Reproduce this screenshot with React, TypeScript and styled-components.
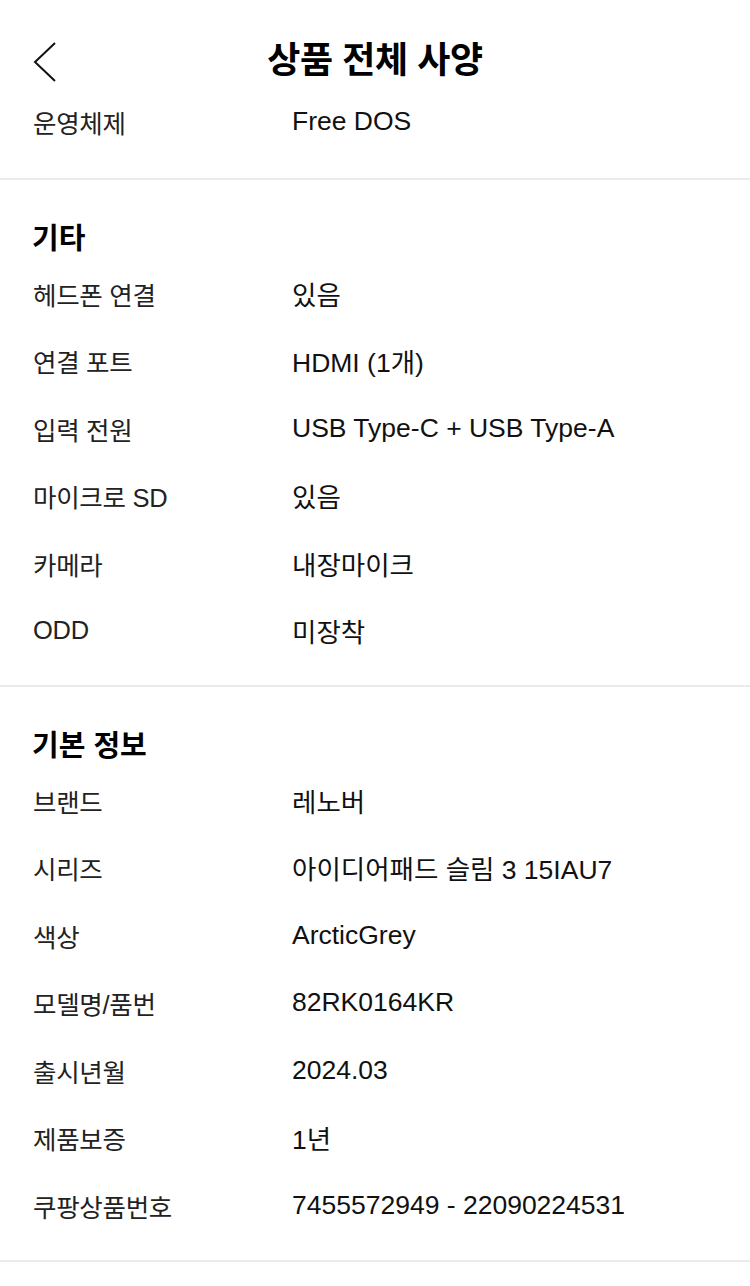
import styled, { createGlobalStyle } from "styled-components";

const GlobalStyle = createGlobalStyle`
  body {
    margin: 0;
    background: #fff;
    font-family: "Liberation Sans", "Noto Sans CJK KR", sans-serif;
    color: #111;
  }
`;

const Page = styled.div`
  width: 750px;
  background: #fff;
`;

const Header = styled.header`
  position: relative;
  height: 88px;
  box-sizing: border-box;
  padding-top: 35px;
  display: flex;
  align-items: flex-start;
  justify-content: center;
`;

const BackButton = styled.button`
  position: absolute;
  left: 28px;
  top: 38px;
  width: 34px;
  height: 48px;
  padding: 0;
  border: 0;
  background: none;
  display: flex;
  align-items: center;
  justify-content: center;
`;

const Title = styled.h1`
  margin: 0;
  height: 52px;
  line-height: 52px;
  font-size: 36px;
  font-weight: 700;
  letter-spacing: -0.4px;
  color: #000;
`;

const Section = styled.section<{ $top: number; $bottom: number }>`
  padding: ${(p) => p.$top}px 0 ${(p) => p.$bottom}px;
  border-bottom: 2px solid #ebebeb;
`;

const SectionTitle = styled.h2`
  margin: 0;
  padding: 0 32px;
  height: 42px;
  line-height: 42px;
  font-size: 29px;
  font-weight: 700;
  color: #000;
`;

const Row = styled.div`
  display: grid;
  grid-template-columns: 259px 1fr;
  align-items: center;
  height: 67.5px;
  padding-left: 33px;
`;

const Label = styled.span`
  font-size: 25.5px;
  letter-spacing: -0.3px;
  color: #222;
`;

const Value = styled.span`
  font-size: 26.5px;
  color: #111;
`;

type Spec = [string, string];

const etc: Spec[] = [
  ["헤드폰 연결", "있음"],
  ["연결 포트", "HDMI (1개)"],
  ["입력 전원", "USB Type-C + USB Type-A"],
  ["마이크로 SD", "있음"],
  ["카메라", "내장마이크"],
  ["ODD", "미장착"],
];

const basic: Spec[] = [
  ["브랜드", "레노버"],
  ["시리즈", "아이디어패드 슬림 3 15IAU7"],
  ["색상", "ArcticGrey"],
  ["모델명/품번", "82RK0164KR"],
  ["출시년월", "2024.03"],
  ["제품보증", "1년"],
  ["쿠팡상품번호", "7455572949 - 22090224531"],
];

const SpecRows = ({ items }: { items: Spec[] }) => (
  <>
    {items.map(([k, v]) => (
      <Row key={k}>
        <Label>{k}</Label>
        <Value>{v}</Value>
      </Row>
    ))}
  </>
);

export default function App() {
  return (
    <Page>
      <GlobalStyle />
      <Header>
        <BackButton aria-label="뒤로">
          <svg width="26" height="42" viewBox="0 0 26 42">
            <path d="M23 2 L3 21 L23 40" fill="none" stroke="#111" strokeWidth="2" />
          </svg>
        </BackButton>
        <Title>상품 전체 사양</Title>
      </Header>

      <Section $top={0} $bottom={22}>
        <SpecRows items={[["운영체제", "Free DOS"]]} />
      </Section>

      <Section $top={38} $bottom={20}>
        <SectionTitle>기타</SectionTitle>
        <SpecRows items={etc} />
      </Section>

      <Section $top={38} $bottom={21}>
        <SectionTitle>기본 정보</SectionTitle>
        <SpecRows items={basic} />
      </Section>
    </Page>
  );
}
